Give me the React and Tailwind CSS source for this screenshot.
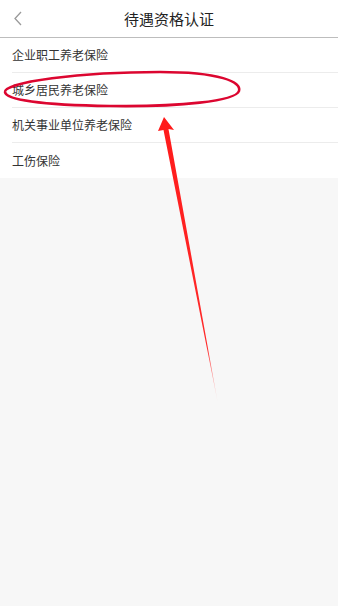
import React from 'react';

const items = ['企业职工养老保险', '城乡居民养老保险', '机关事业单位养老保险', '工伤保险'];

export default function App() {
  return (
    <main
      className="relative w-[338px] h-[606px] overflow-hidden bg-[#f7f7f7]"
      style={{ fontFamily: '"Noto Sans CJK SC", "Liberation Sans", sans-serif' }}
    >
      {/* HEADER */}
      <div className="relative h-[38px] bg-white border-b border-[#bdbdbd] flex items-center justify-center">
        <svg className="absolute left-[13px] top-[11px]" width="10" height="15" viewBox="0 0 10 15">
          <path d="M8 1 L2 7.5 L8 14" fill="none" stroke="#9a9a9a" strokeWidth="1.3" />
        </svg>
        <h1 className="text-[15px] text-[#222] leading-none">待遇资格认证</h1>
      </div>

      {/* LIST */}
      <ul className="bg-white">
        {items.map((item, i) => (
          <li key={item} className="pl-3">
            <div
              className={`h-[35px] flex items-center pr-[13px] text-[12px] text-[#333] ${
                i < items.length - 1 ? 'border-b border-[#ececec]' : ''
              }`}
            >
              {item}
            </div>
          </li>
        ))}
      </ul>

      {/* ANNOTATION */}
      <svg className="absolute left-0 top-0 pointer-events-none" width="338" height="606" viewBox="0 0 338 606">
        <defs>
          <linearGradient id="tail" x1="164" y1="117" x2="218" y2="404" gradientUnits="userSpaceOnUse">
            <stop offset="0" stopColor="#ff1a1a" />
            <stop offset="0.8" stopColor="#ff2a2a" />
            <stop offset="1" stopColor="#ff2a2a" stopOpacity="0" />
          </linearGradient>
        </defs>
        <path
          d="M5 92 C 4 82, 80 72, 160 72 C 220 72, 242 82, 239 91 C 236 101, 180 107, 110 106 C 40 105, 6 100, 5 92 Z"
          fill="none"
          stroke="#dc0630"
          strokeWidth="2.6"
        />
        <path d="M164 117 L174 130 L168.5 129 L218 404 L163.5 130 L158 131 Z" fill="url(#tail)" />
      </svg>
    </main>
  );
}
